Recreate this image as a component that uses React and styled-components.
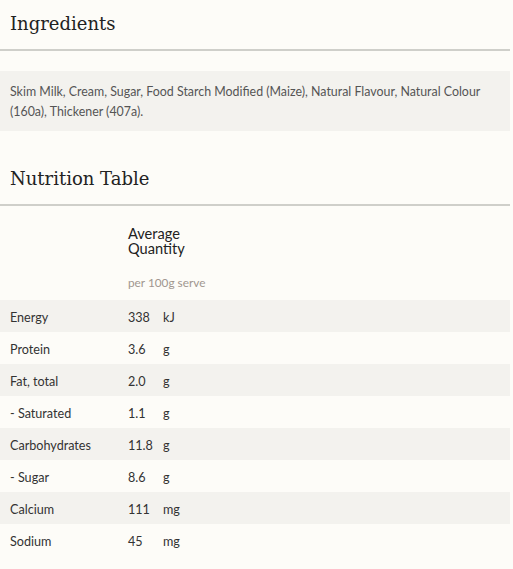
import React from "react";
import styled, { createGlobalStyle } from "styled-components";

const Global = createGlobalStyle`
  html, body { margin: 0; padding: 0; background: #fdfcf8; }
  body { font-family: Lato, "Noto Sans", sans-serif; }
`;

const Page = styled.div`
  width: 510px;
  background: #fdfcf8;
  padding-bottom: 12px;
`;

const Heading = styled.h2`
  margin: ${(p) => (p.$first ? "0" : "24px 0 0")};
  padding: 12px 10px 13px;
  font-family: "DejaVu Serif", serif;
  font-weight: 400;
  font-size: 18px;
  line-height: 24px;
  color: #222;
  border-bottom: 2px solid #cfcfca;
`;

const IngredientBox = styled.p`
  margin: 20px 0 0;
  padding: 11px 10px 9px;
  background: #f3f2ee;
  font-size: 12.4px;
  line-height: 20px;
  color: #555;
`;

const Table = styled.div`
  display: grid;
  grid-template-columns: 128px 35px 1fr;
`;

const HeadCell = styled.div`
  grid-column: 2 / span 2;
  padding: 20px 0 0;
  font-size: 14.6px;
  line-height: 15px;
  color: #222;
`;

const Line = styled.span`
  display: block;
`;

const Serve = styled.div`
  grid-column: 2 / span 2;
  padding: 20px 0 10px;
  font-size: 11.8px;
  line-height: 14px;
  color: #a0968f;
`;

const Row = styled.div`
  grid-column: 1 / -1;
  display: grid;
  grid-template-columns: subgrid;
  height: 32px;
  box-sizing: border-box;
  padding-top: 2px;
  align-items: center;
  background: ${(p) => (p.$shade ? "#f3f2ee" : "transparent")};
  font-size: 12.6px;
  color: #333;
`;

const Label = styled.span`
  padding-left: 10px;
`;

const rows = [
  ["Energy", "338", "kJ"],
  ["Protein", "3.6", "g"],
  ["Fat, total", "2.0", "g"],
  ["- Saturated", "1.1", "g"],
  ["Carbohydrates", "11.8", "g"],
  ["- Sugar", "8.6", "g"],
  ["Calcium", "111", "mg"],
  ["Sodium", "45", "mg"],
];

export default function App() {
  return (
    <Page>
      <Global />
      <Heading $first>Ingredients</Heading>
      <IngredientBox>
        Skim Milk, Cream, Sugar, Food Starch Modified (Maize), Natural Flavour, Natural Colour
        (160a), Thickener (407a).
      </IngredientBox>
      <Heading>Nutrition Table</Heading>
      <Table>
        <HeadCell>
          <Line>Average</Line>
          <Line>Quantity</Line>
        </HeadCell>
        <Serve>per 100g serve</Serve>
        {rows.map(([l, v, u], i) => (
          <Row key={l} $shade={i % 2 === 0}>
            <Label>{l}</Label>
            <span>{v}</span>
            <span>{u}</span>
          </Row>
        ))}
      </Table>
    </Page>
  );
}
